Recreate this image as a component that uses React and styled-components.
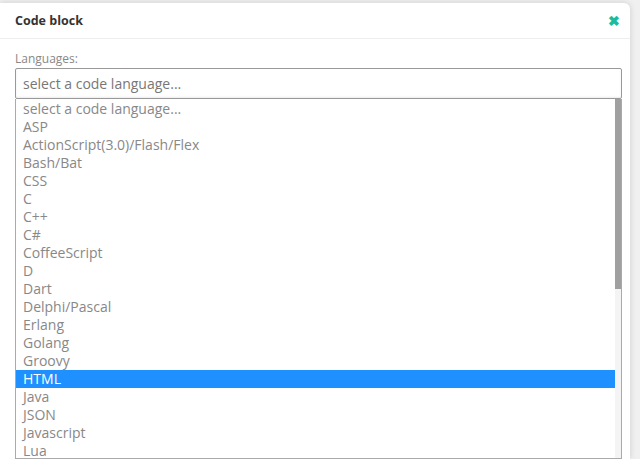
import React from "react";
import styled, { createGlobalStyle } from "styled-components";

const G = createGlobalStyle`
  html,body{margin:0;padding:0;background:#f0f0f0;overflow:hidden;}
  body{font-family:"Open Sans","Noto Sans",sans-serif;}
`;
const Page = styled.div`height:459px;padding-top:3px;box-sizing:border-box;`;
const Dialog = styled.div`
  width:630px;height:456px;background:#fff;border-radius:0 6px 0 0;
  box-shadow:0 0 6px rgba(0,0,0,.15);display:flex;flex-direction:column;overflow:hidden;
`;
const Header = styled.div`
  height:35px;border-bottom:1px solid #eee;display:flex;align-items:center;
  justify-content:space-between;padding:0 10px 0 15px;flex:none;
`;
const Title = styled.div`font-size:12.5px;font-weight:700;color:#333;`;
const Close = styled.div`color:#1abc9c;font-size:14px;font-weight:700;line-height:1;`;
const Body = styled.div`padding:11px 8px 0 15px;display:flex;flex-direction:column;flex:1;min-height:0;`;
const Label = styled.div`font-size:12px;color:#888;line-height:17px;margin-bottom:1px;flex:none;`;
const Select = styled.div`
  flex:none;height:29px;border:1px solid #999;border-radius:2px;display:flex;align-items:center;
  padding-left:7px;font-size:14px;color:#777;box-shadow:inset 0 -1px 2px rgba(0,0,0,.08);
`;
const List = styled.div`
  flex:1;border:1px solid #aaa;border-top:none;position:relative;padding-top:1px;overflow:hidden;
`;
const Row = styled.div`
  height:18px;line-height:18px;font-size:14px;padding-left:7px;margin-right:6px;
  color:${p=>p.$sel?"#fff":"#888"};background:${p=>p.$sel?"#1e90ff":"transparent"};
`;
const Track = styled.div`position:absolute;right:0;top:0;bottom:0;width:6px;background:#f4f4f4;`;
const Thumb = styled.div`position:absolute;right:0;top:0;height:190px;width:6px;background:#a0a0a0;`;

const langs = ["select a code language...","ASP","ActionScript(3.0)/Flash/Flex","Bash/Bat","CSS","C","C++","C#","CoffeeScript","D","Dart","Delphi/Pascal","Erlang","Golang","Groovy","HTML","Java","JSON","Javascript","Lua"];

export default function App(){
  return <Page><G/><Dialog>
    <Header><Title>Code block</Title><Close>✖</Close></Header>
    <Body>
      <Label>Languages:</Label>
      <Select>select a code language...</Select>
      <List>
        {langs.map(l=><Row key={l} $sel={l==="HTML"}>{l}</Row>)}
        <Track><Thumb/></Track>
      </List>
    </Body>
  </Dialog></Page>;
}
